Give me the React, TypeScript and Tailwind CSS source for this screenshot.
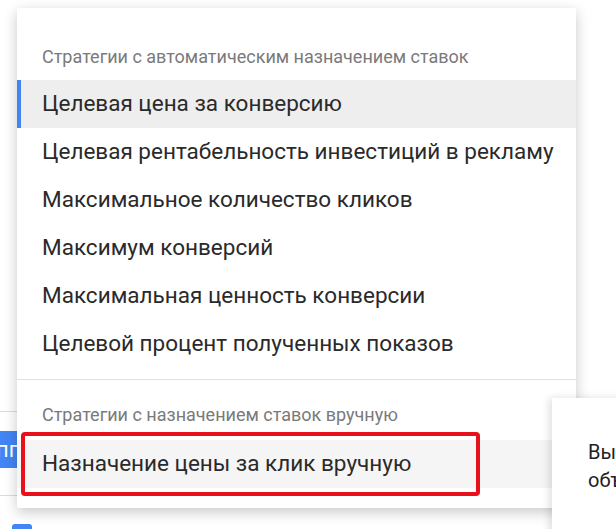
const autoItems = [
  "Целевая цена за конверсию",
  "Целевая рентабельность инвестиций в рекламу",
  "Максимальное количество кликов",
  "Максимум конверсий",
  "Максимальная ценность конверсии",
  "Целевой процент полученных показов",
];

function MenuHeader({ label, className }: { label: string; className: string }) {
  return (
    <div className={`flex items-end pl-[25px] text-[18px] leading-6 text-[#7a7a7a] ${className}`}>
      {label}
    </div>
  );
}

export default function App() {
  return (
    <div className="relative h-[529px] w-[616px] overflow-hidden bg-white font-['Roboto',sans-serif]">
      {/* page behind the dropdown */}
      <div className="flex flex-col pt-[411px]">
        <div className="h-px w-[40px] bg-[#dadce0]" />
        <div className="mt-[19px] flex h-[37px] w-[40px] items-center overflow-hidden rounded-r bg-[#4285f4] text-[22px] leading-none text-white">
          <span className="-ml-[4px]">пп</span>
        </div>
        <div className="mt-[27px] h-px w-[40px] bg-[#dadce0]" />
        <div className="ml-[12px] mt-[28px] h-[20px] w-[20px] rounded-[3px] bg-[#4285f4]" />
      </div>

      {/* dropdown */}
      <div className="absolute left-[17px] top-[8px] w-[559px] rounded-[2px] bg-white pb-[20px] shadow-[0_4px_14px_rgba(0,0,0,0.22)]">
        <MenuHeader label="Стратегии с автоматическим назначением ставок" className="h-[72px] pb-[11px]" />
        {autoItems.map((item, i) => (
          <div
            key={item}
            className={`flex h-[48px] items-center text-[22.5px] text-[#2a2a2a] ${
              i === 0 ? "border-l-4 border-[#4285f4] bg-[#eeeeee] pl-[21px]" : "pl-[25px]"
            }`}
          >
            {item}
          </div>
        ))}
        <div className="mt-[11px] h-px bg-[#e0e0e0]" />
        <MenuHeader label="Стратегии с назначением ставок вручную" className="h-[60px] pb-[13px]" />
        <div className="flex h-[48px] items-center bg-[#f5f5f5] pl-[25px] text-[22.5px] text-[#2a2a2a]">
          Назначение цены за клик вручную
        </div>

        {/* annotation frame */}
        <div className="absolute left-[4px] top-[424px] h-[64px] w-[459px] rounded-[4px] border-4 border-[#e8101a]" />
      </div>

      {/* side panel on top */}
      <div className="absolute left-[552px] top-[398px] h-[160px] w-[300px] bg-white pl-[36px] pt-[40px] text-[20px] leading-[28px] text-[#202124] shadow-[-3px_0_8px_rgba(0,0,0,0.12)]">
        <div className="whitespace-nowrap">Вы сами устанавливаете ставки</div>
        <div className="whitespace-nowrap">объявлений</div>
      </div>
    </div>
  );
}
